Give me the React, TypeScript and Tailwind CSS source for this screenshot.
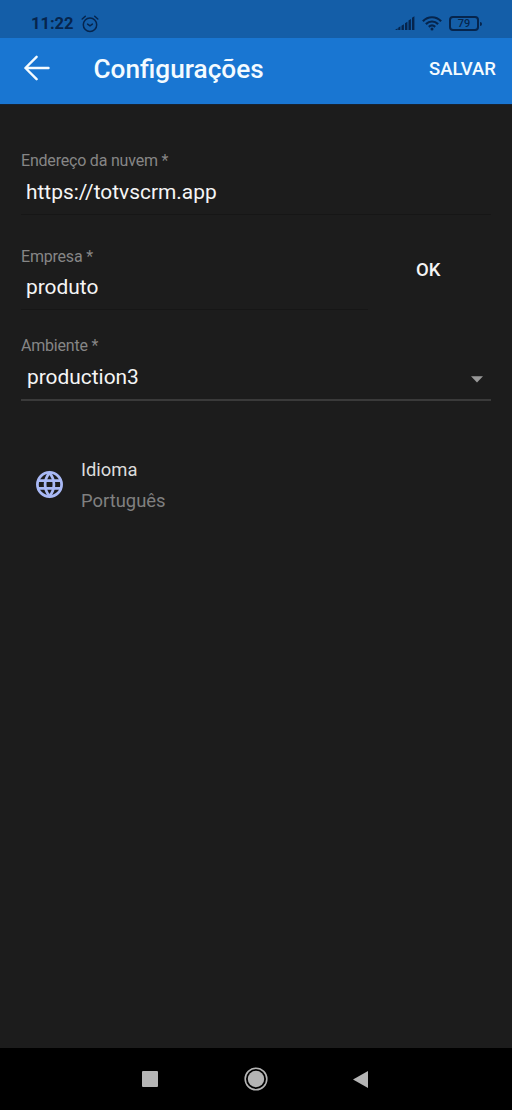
import type { ReactNode } from 'react';

interface FieldProps {
  label: string;
  children: ReactNode;
  className?: string;
}

function Field({ label, children, className = '' }: FieldProps) {
  return (
    <div className={`flex flex-col ${className}`}>
      <span className="h-5 text-[16px] leading-[22px] tracking-[-0.2px] whitespace-nowrap text-[#868686]">{label}</span>
      {children}
    </div>
  );
}

function AlarmIcon() {
  return (
    <svg className="h-[18px] w-[18px]" viewBox="0 0 18 18" fill="none" stroke="currentColor" strokeWidth="1.5" strokeLinecap="round">
      <circle cx="9" cy="9.7" r="6.7" />
      <path d="M1.2 4 4.3 1.3M16.8 4l-3.1-2.7M6.6 9.1 9 10.9l2.4-1.8" />
    </svg>
  );
}

function SignalIcon() {
  return (
    <svg className="h-[15px] w-5" viewBox="0 0 20 15" fill="currentColor">
      <path d="M0 14 2.6 12.2V14zM3.2 11.7 5.4 10.3V14H3.2zM6.5 9.8l2.4-1.6V14H6.5zM10 7.3l2.4-1.6V14H10zM13.5 4.5l2.4-1.6V14h-2.4zM17 1.8 19.4.3V14H17z" />
    </svg>
  );
}

function WifiIcon() {
  return (
    <svg className="h-[15px] w-5" viewBox="0 0 20 15" fill="none" stroke="currentColor" strokeWidth="2.2">
      <path d="M.9 5.2C6-.1 14-.1 19.1 5.2M3.9 8.1c3.5-3.5 8.7-3.5 12.2 0M6.8 10.9c1.9-1.8 4.5-1.8 6.4 0" />
      <circle cx="10" cy="13" r="1.5" fill="currentColor" stroke="none" />
    </svg>
  );
}

function Battery({ level }: { level: number }) {
  return (
    <div className="flex items-center gap-px">
      <div className="flex h-[15px] w-[30px] items-center justify-center rounded-[4px] border-2 border-current text-[11px] leading-none font-medium">
        {level}
      </div>
      <div className="h-1 w-[2px] rounded-r-sm bg-current" />
    </div>
  );
}

function StatusBar() {
  return (
    <div className="flex h-[38px] items-start justify-between bg-[#145ea8] pt-[14px] pr-[30px] pl-[31px] text-[#06254d]">
      <div className="flex items-center gap-[7px]">
        <span className="w-[43px] text-[16.5px] leading-[19px] font-bold whitespace-nowrap">11:22</span>
        <AlarmIcon />
      </div>
      <div className="flex items-center gap-[7px] pt-[2px]">
        <SignalIcon />
        <WifiIcon />
        <Battery level={79} />
      </div>
    </div>
  );
}

function AppBar() {
  return (
    <header className="flex h-[66px] items-center bg-[#1976d2] pr-4 pl-6 text-[#f4fbff]">
      <button className="mt-[-6px] h-[26px] w-[26px]" aria-label="Voltar">
        <svg viewBox="0 0 26 26" fill="none" stroke="currentColor" strokeWidth="2.4" strokeLinecap="round" strokeLinejoin="round">
          <path d="M24.5 13H1.6M12.6 1.8 1.4 13l11.2 11.2" />
        </svg>
      </button>
      <h1 className="mt-[-4px] ml-[43.5px] text-[26.2px] leading-8 font-medium whitespace-nowrap">Configurações</h1>
      <button className="mt-[-4px] ml-auto text-[18.5px] leading-6 font-medium whitespace-nowrap">SALVAR</button>
    </header>
  );
}

export default function App() {
  return (
    <div className="flex h-[1110px] w-[512px] flex-col overflow-hidden bg-[#1c1c1c] font-['Roboto','Noto_Sans',sans-serif]">
      <StatusBar />
      <AppBar />

      <main className="flex flex-1 flex-col border-t border-[#172230] pt-[45px] pr-[21px] pl-[21px]">
        <Field label="Endereço da nuvem *" className="h-[65px] border-b border-[#161616]">
          <span className="mt-2 pl-[5px] text-[20.9px] leading-7 text-[#f5f5f5]">https://totvscrm.app</span>
        </Field>

        <div className="mt-[31px] flex">
          <Field label="Empresa *" className="h-[64px] w-[347px] border-b border-[#161616]">
            <span className="mt-[7px] pl-[5px] text-[20.9px] leading-7 text-[#f5f5f5]">produto</span>
          </Field>
          <button className="mt-[12px] ml-[48px] h-6 text-[18.5px] leading-6 font-medium text-[#f5f5f5]">OK</button>
        </div>

        <Field label="Ambiente *" className="mt-[25px] h-[66px] border-b-2 border-[#3a3a3a]">
          <div className="mt-2 flex items-center justify-between pr-2 pl-[6px]">
            <span className="text-[20.9px] leading-7 text-[#f5f5f5]">production3</span>
            <svg className="mt-[5px] h-[7px] w-3" viewBox="0 0 12 7" fill="#989898">
              <path d="M0 .3h12L6 6.5z" />
            </svg>
          </div>
        </Field>

        <div className="mt-[57px] flex pl-3">
          <svg className="mt-[10px] h-[33px] w-[33px]" viewBox="0 0 24 24" fill="none" stroke="#a9b9f5" strokeWidth="2">
            <circle cx="12" cy="12" r="8.8" />
            <path d="M3.8 9.2h16.4M3.8 14.8h16.4" />
            <path d="M12 3.5C9.6 6.3 8.8 9 8.8 12s.8 5.7 3.2 8.5c2.4-2.8 3.2-5.5 3.2-8.5S14.4 6.3 12 3.5z" />
          </svg>
          <div className="ml-[15px] flex flex-col gap-[7px] text-[18.4px] leading-6">
            <span className="text-[#dcdcdc]">Idioma</span>
            <span className="text-[#808080]">Português</span>
          </div>
        </div>
      </main>

      <nav className="flex h-[62px] items-center bg-black pl-[142px]">
        <div className="h-4 w-4 rounded-[1px] bg-[#b5b5b5]" />
        <svg className="ml-[86px] h-6 w-6" viewBox="0 0 24 24">
          <circle cx="12" cy="12" r="10.8" fill="none" stroke="#b5b5b5" strokeWidth="1.6" />
          <circle cx="12" cy="12" r="8.2" fill="#b5b5b5" />
        </svg>
        <svg className="ml-[85px] h-[17px] w-[15px]" viewBox="0 0 15 17" fill="#b5b5b5">
          <path d="M15 0v17L0 8.5z" />
        </svg>
      </nav>
    </div>
  );
}
